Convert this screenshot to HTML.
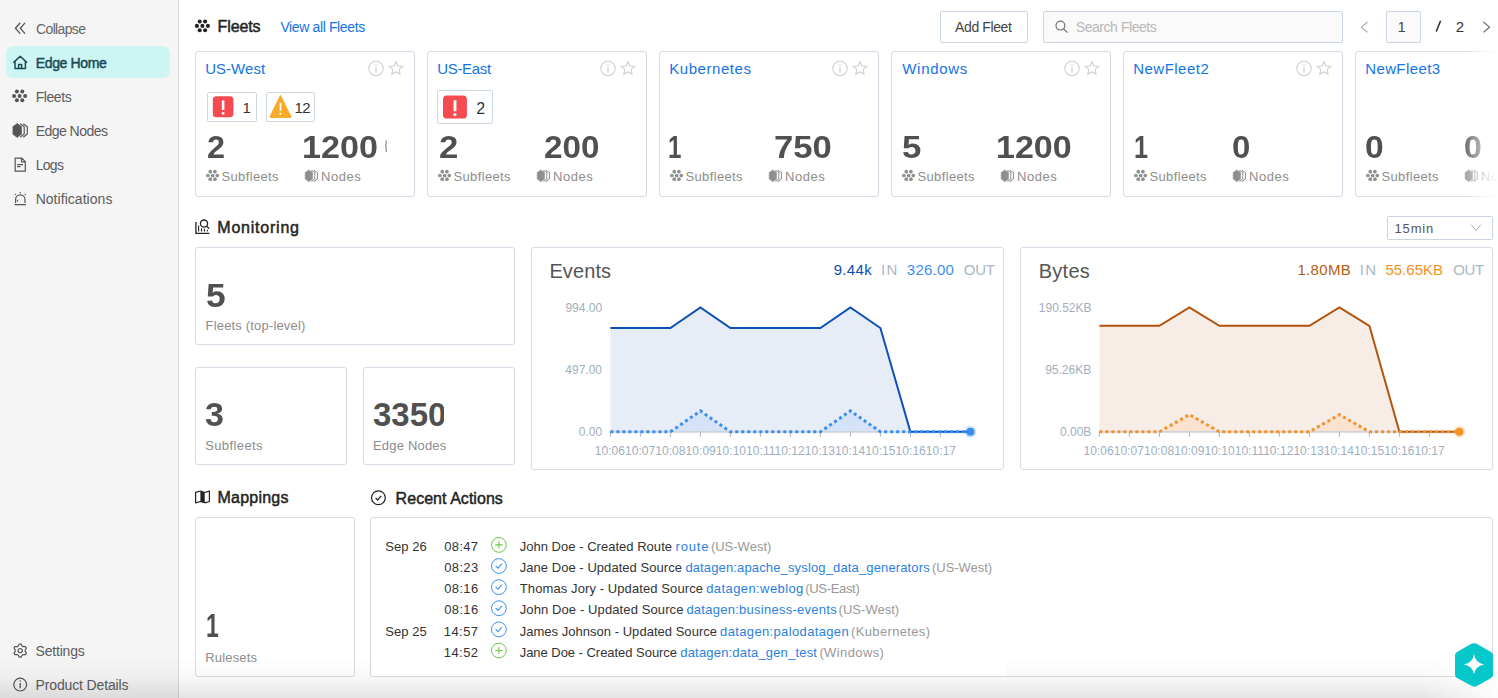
<!DOCTYPE html>
<html><head><meta charset="utf-8"><style>
html,body{margin:0;padding:0}
body{width:1498px;height:698px;overflow:hidden;background:#fff;position:relative;font-family:"Liberation Sans",sans-serif}
.t{position:absolute;white-space:nowrap}
.b{position:absolute;box-sizing:border-box;border:1px solid}
</style></head><body>
<div style="position:absolute;left:0;top:0;width:178px;height:698px;background:#f5f5f5;border-right:1px solid #dcdcdc"></div><div style="position:absolute;left:6px;top:46px;width:164px;height:32px;background:#ccf5f4;border-radius:7px"></div><div class="b" style="left:940px;top:11px;width:88px;height:32px;background:#fff;border-color:#c9d5e0;border-radius:2px;"></div><div class="b" style="left:1043px;top:11px;width:300px;height:32px;background:#fafafa;border-color:#c9d5e0;border-radius:2px;"></div><div class="b" style="left:1386px;top:11px;width:35px;height:32px;background:#fafafa;border-color:#c9d5e0;border-radius:2px;"></div><div class="b" style="left:195px;top:51px;width:220px;height:146px;background:#fff;border-color:#d3dce5;border-radius:3px;"></div><div class="b" style="left:427px;top:51px;width:220px;height:146px;background:#fff;border-color:#d3dce5;border-radius:3px;"></div><div class="b" style="left:659px;top:51px;width:220px;height:146px;background:#fff;border-color:#d3dce5;border-radius:3px;"></div><div class="b" style="left:891px;top:51px;width:220px;height:146px;background:#fff;border-color:#d3dce5;border-radius:3px;"></div><div class="b" style="left:1123px;top:51px;width:220px;height:146px;background:#fff;border-color:#d3dce5;border-radius:3px;"></div><div class="b" style="left:1355px;top:51px;width:220px;height:146px;background:#fff;border-color:#d3dce5;border-radius:3px;"></div><div class="b" style="left:207px;top:92px;width:50px;height:30px;background:#fff;border-color:#ccd7e1;border-radius:2px;"></div><div class="b" style="left:266px;top:92px;width:49px;height:30px;background:#fff;border-color:#ccd7e1;border-radius:2px;"></div><div class="b" style="left:437px;top:90px;width:56px;height:34px;background:#fff;border-color:#ccd7e1;border-radius:2px;"></div><div class="b" style="left:1387px;top:216px;width:106px;height:24px;background:#fff;border-color:#c9d5e0;border-radius:2px;"></div><div class="b" style="left:195px;top:247px;width:320px;height:98px;background:#fff;border-color:#d3dce5;border-radius:3px;"></div><div class="b" style="left:195px;top:367px;width:152px;height:98px;background:#fff;border-color:#d3dce5;border-radius:3px;"></div><div class="b" style="left:363px;top:367px;width:152px;height:98px;background:#fff;border-color:#d3dce5;border-radius:3px;"></div><div class="b" style="left:531px;top:247px;width:473px;height:223px;background:#fff;border-color:#d3dce5;border-radius:3px;"></div><div class="b" style="left:1020px;top:247px;width:473px;height:223px;background:#fff;border-color:#d3dce5;border-radius:3px;"></div><div class="b" style="left:195px;top:517px;width:160px;height:160px;background:#fff;border-color:#d3dce5;border-radius:3px;"></div><div class="b" style="left:370px;top:517px;width:1123px;height:160px;background:#fff;border-color:#d3dce5;border-radius:3px;"></div>
<svg style="position:absolute;left:0;top:0" width="1498" height="698" viewBox="0 0 1498 698"><path d="M20.2 22.8 L15.4 28.3 L20.2 33.6 M25 22.8 L20.3 28.3 L25 33.6" fill="none" stroke="#555" stroke-width="1.3"/><path d="M13.4 62.6 L20.2 56.3 L27 62.6 M15 61.2 V68.4 H25.4 V61.2 M18.6 68.4 V64.4 H21.6 V68.4" fill="none" stroke="#174a54" stroke-width="1.5" stroke-linejoin="round"/><circle cx="16.90" cy="91.50" r="2.0" fill="#555"/><circle cx="22.30" cy="91.50" r="2.0" fill="#555"/><circle cx="14.10" cy="95.90" r="2.0" fill="#555"/><circle cx="19.60" cy="95.90" r="2.0" fill="#555"/><circle cx="25.10" cy="95.90" r="2.0" fill="#555"/><circle cx="16.90" cy="100.20" r="2.0" fill="#555"/><circle cx="22.30" cy="100.20" r="2.0" fill="#555"/><polygon points="17.20,123.60 21.50,126.60 21.50,134.20 17.20,137.40 12.90,134.20 12.90,126.60" fill="#555" stroke="#555" stroke-width="0.6" stroke-linejoin="round"/><polyline points="20.20,123.70 24.20,126.80 24.20,134.00 20.20,137.30" fill="none" stroke="#555" stroke-width="1.20"/><polyline points="23.30,123.70 27.30,126.80 27.30,134.00 23.30,137.30" fill="none" stroke="#555" stroke-width="1.20"/><path d="M15.2 158.2 H21.8 L25.3 161.7 V171.2 H15.2 Z M21.5 158.4 V161.9 H25.1 M17.2 164.6 H23 M17.2 166.7 H20.4" fill="none" stroke="#555" stroke-width="1.2" stroke-linejoin="round"/><path d="M15.6 203 V199.6 A4.7 4.7 0 0 1 25.0 199.6 V203 M14.6 204.7 H26 M20.3 191.9 V193.2 M15.0 194.0 L15.9 194.8 M25.6 194.0 L24.7 194.8 M17.5 201.6 V199.8" fill="none" stroke="#555" stroke-width="1.2"/><polygon points="19.34,644.06 21.06,644.06 22.11,645.98 23.24,646.63 25.44,646.58 26.30,648.07 25.16,649.95 25.16,651.25 26.30,653.13 25.44,654.62 23.24,654.57 22.11,655.22 21.06,657.14 19.34,657.14 18.29,655.22 17.16,654.57 14.96,654.62 14.10,653.13 15.24,651.25 15.24,649.95 14.10,648.07 14.96,646.58 17.16,646.63 18.29,645.98" fill="none" stroke="#555" stroke-width="1.2" stroke-linejoin="round"/><circle cx="20.2" cy="650.6" r="2.1" fill="none" stroke="#555" stroke-width="1.2"/><circle cx="20.2" cy="684.6" r="6.4" fill="none" stroke="#555" stroke-width="1.2"/><path d="M20.2 683 V688.2" stroke="#555" stroke-width="1.3"/><circle cx="20.2" cy="681.1" r="0.75" fill="#555"/><circle cx="199.70" cy="21.50" r="2.05" fill="#222"/><circle cx="205.10" cy="21.50" r="2.05" fill="#222"/><circle cx="196.90" cy="25.90" r="2.05" fill="#222"/><circle cx="202.40" cy="25.90" r="2.05" fill="#222"/><circle cx="207.90" cy="25.90" r="2.05" fill="#222"/><circle cx="199.70" cy="30.20" r="2.05" fill="#222"/><circle cx="205.10" cy="30.20" r="2.05" fill="#222"/><path d="M195.9 222 V233.4 H209.4" fill="none" stroke="#222" stroke-width="1.3"/><path d="M198.6 225.5 V231.6 M201.5 228.3 V231.6 M204.4 228.8 V231.6 M207.3 229.8 V231.6" stroke="#222" stroke-width="1.1"/><circle cx="204" cy="223.6" r="3.6" fill="#fff" stroke="#222" stroke-width="1.3"/><path d="M206.6 226.2 L209.2 228.6" stroke="#222" stroke-width="1.4"/><path d="M195.6 492.3 L200.4 491 L204.7 492.5 L209.4 491.2 V501.5 L204.7 502.8 L200.4 501.5 L195.6 502.8 Z" fill="#fff" stroke="#222" stroke-width="1.2" stroke-linejoin="round"/><path d="M200.4 491 L204.7 492.5 V502.8 L200.4 501.5 Z" fill="#222"/><circle cx="378.4" cy="497.8" r="6.9" fill="none" stroke="#222" stroke-width="1.2"/><path d="M375.6 497.9 L377.6 500 L381.2 495.8" fill="none" stroke="#222" stroke-width="1.2"/><circle cx="1060.4" cy="25.6" r="4.4" fill="none" stroke="#777" stroke-width="1.2"/><path d="M1063.6 28.8 L1067.6 32.6" stroke="#777" stroke-width="1.2"/><path d="M1440.6 20.8 L1436.2 31.6" stroke="#333" stroke-width="1.5"/><path d="M1367.6 22 L1361.4 27.2 L1367.6 32.4" fill="none" stroke="#aaa" stroke-width="1.1"/><path d="M1483.4 22 L1489.6 27.2 L1483.4 32.4" fill="none" stroke="#666" stroke-width="1.1"/><path d="M1471.2 224.6 L1476 230.6 L1480.8 224.6" fill="none" stroke="#aaa" stroke-width="1"/><circle cx="376" cy="68.4" r="7.2" fill="none" stroke="#cfcfcf" stroke-width="1.1"/><path d="M376 67.3 V72.4" stroke="#cfcfcf" stroke-width="1.3"/><circle cx="376" cy="65.1" r="0.8" fill="#cfcfcf"/><polygon points="395.90,61.40 397.78,66.01 402.75,66.38 398.94,69.59 400.13,74.42 395.90,71.80 391.67,74.42 392.86,69.59 389.05,66.38 394.02,66.01" fill="none" stroke="#cfcfcf" stroke-width="1.1" stroke-linejoin="round"/><circle cx="608" cy="68.4" r="7.2" fill="none" stroke="#cfcfcf" stroke-width="1.1"/><path d="M608 67.3 V72.4" stroke="#cfcfcf" stroke-width="1.3"/><circle cx="608" cy="65.1" r="0.8" fill="#cfcfcf"/><polygon points="627.90,61.40 629.78,66.01 634.75,66.38 630.94,69.59 632.13,74.42 627.90,71.80 623.67,74.42 624.86,69.59 621.05,66.38 626.02,66.01" fill="none" stroke="#cfcfcf" stroke-width="1.1" stroke-linejoin="round"/><circle cx="840" cy="68.4" r="7.2" fill="none" stroke="#cfcfcf" stroke-width="1.1"/><path d="M840 67.3 V72.4" stroke="#cfcfcf" stroke-width="1.3"/><circle cx="840" cy="65.1" r="0.8" fill="#cfcfcf"/><polygon points="859.90,61.40 861.78,66.01 866.75,66.38 862.94,69.59 864.13,74.42 859.90,71.80 855.67,74.42 856.86,69.59 853.05,66.38 858.02,66.01" fill="none" stroke="#cfcfcf" stroke-width="1.1" stroke-linejoin="round"/><circle cx="1072" cy="68.4" r="7.2" fill="none" stroke="#cfcfcf" stroke-width="1.1"/><path d="M1072 67.3 V72.4" stroke="#cfcfcf" stroke-width="1.3"/><circle cx="1072" cy="65.1" r="0.8" fill="#cfcfcf"/><polygon points="1091.90,61.40 1093.78,66.01 1098.75,66.38 1094.94,69.59 1096.13,74.42 1091.90,71.80 1087.67,74.42 1088.86,69.59 1085.05,66.38 1090.02,66.01" fill="none" stroke="#cfcfcf" stroke-width="1.1" stroke-linejoin="round"/><circle cx="1304" cy="68.4" r="7.2" fill="none" stroke="#cfcfcf" stroke-width="1.1"/><path d="M1304 67.3 V72.4" stroke="#cfcfcf" stroke-width="1.3"/><circle cx="1304" cy="65.1" r="0.8" fill="#cfcfcf"/><polygon points="1323.90,61.40 1325.78,66.01 1330.75,66.38 1326.94,69.59 1328.13,74.42 1323.90,71.80 1319.67,74.42 1320.86,69.59 1317.05,66.38 1322.02,66.01" fill="none" stroke="#cfcfcf" stroke-width="1.1" stroke-linejoin="round"/><circle cx="210.28" cy="171.72" r="1.85" fill="#8f8f8f"/><circle cx="214.92" cy="171.72" r="1.85" fill="#8f8f8f"/><circle cx="207.87" cy="175.50" r="1.85" fill="#8f8f8f"/><circle cx="212.60" cy="175.50" r="1.85" fill="#8f8f8f"/><circle cx="217.33" cy="175.50" r="1.85" fill="#8f8f8f"/><circle cx="210.28" cy="179.20" r="1.85" fill="#8f8f8f"/><circle cx="214.92" cy="179.20" r="1.85" fill="#8f8f8f"/><polygon points="308.85,169.97 312.51,172.52 312.51,178.98 308.85,181.70 305.20,178.98 305.20,172.52" fill="#8f8f8f" stroke="#8f8f8f" stroke-width="0.6" stroke-linejoin="round"/><polyline points="311.40,170.06 314.81,172.69 314.81,178.81 311.40,181.62" fill="none" stroke="#8f8f8f" stroke-width="1.02"/><polyline points="314.04,170.06 317.44,172.69 317.44,178.81 314.04,181.62" fill="none" stroke="#8f8f8f" stroke-width="1.02"/><circle cx="442.28" cy="171.72" r="1.85" fill="#8f8f8f"/><circle cx="446.92" cy="171.72" r="1.85" fill="#8f8f8f"/><circle cx="439.87" cy="175.50" r="1.85" fill="#8f8f8f"/><circle cx="444.60" cy="175.50" r="1.85" fill="#8f8f8f"/><circle cx="449.33" cy="175.50" r="1.85" fill="#8f8f8f"/><circle cx="442.28" cy="179.20" r="1.85" fill="#8f8f8f"/><circle cx="446.92" cy="179.20" r="1.85" fill="#8f8f8f"/><polygon points="540.86,169.97 544.51,172.52 544.51,178.98 540.86,181.70 537.20,178.98 537.20,172.52" fill="#8f8f8f" stroke="#8f8f8f" stroke-width="0.6" stroke-linejoin="round"/><polyline points="543.41,170.06 546.81,172.69 546.81,178.81 543.41,181.62" fill="none" stroke="#8f8f8f" stroke-width="1.02"/><polyline points="546.04,170.06 549.44,172.69 549.44,178.81 546.04,181.62" fill="none" stroke="#8f8f8f" stroke-width="1.02"/><circle cx="674.28" cy="171.72" r="1.85" fill="#8f8f8f"/><circle cx="678.92" cy="171.72" r="1.85" fill="#8f8f8f"/><circle cx="671.87" cy="175.50" r="1.85" fill="#8f8f8f"/><circle cx="676.60" cy="175.50" r="1.85" fill="#8f8f8f"/><circle cx="681.33" cy="175.50" r="1.85" fill="#8f8f8f"/><circle cx="674.28" cy="179.20" r="1.85" fill="#8f8f8f"/><circle cx="678.92" cy="179.20" r="1.85" fill="#8f8f8f"/><polygon points="772.86,169.97 776.51,172.52 776.51,178.98 772.86,181.70 769.20,178.98 769.20,172.52" fill="#8f8f8f" stroke="#8f8f8f" stroke-width="0.6" stroke-linejoin="round"/><polyline points="775.41,170.06 778.81,172.69 778.81,178.81 775.41,181.62" fill="none" stroke="#8f8f8f" stroke-width="1.02"/><polyline points="778.04,170.06 781.44,172.69 781.44,178.81 778.04,181.62" fill="none" stroke="#8f8f8f" stroke-width="1.02"/><circle cx="906.28" cy="171.72" r="1.85" fill="#8f8f8f"/><circle cx="910.92" cy="171.72" r="1.85" fill="#8f8f8f"/><circle cx="903.87" cy="175.50" r="1.85" fill="#8f8f8f"/><circle cx="908.60" cy="175.50" r="1.85" fill="#8f8f8f"/><circle cx="913.33" cy="175.50" r="1.85" fill="#8f8f8f"/><circle cx="906.28" cy="179.20" r="1.85" fill="#8f8f8f"/><circle cx="910.92" cy="179.20" r="1.85" fill="#8f8f8f"/><polygon points="1004.86,169.97 1008.51,172.52 1008.51,178.98 1004.86,181.70 1001.20,178.98 1001.20,172.52" fill="#8f8f8f" stroke="#8f8f8f" stroke-width="0.6" stroke-linejoin="round"/><polyline points="1007.41,170.06 1010.81,172.69 1010.81,178.81 1007.41,181.62" fill="none" stroke="#8f8f8f" stroke-width="1.02"/><polyline points="1010.04,170.06 1013.44,172.69 1013.44,178.81 1010.04,181.62" fill="none" stroke="#8f8f8f" stroke-width="1.02"/><circle cx="1138.28" cy="171.72" r="1.85" fill="#8f8f8f"/><circle cx="1142.92" cy="171.72" r="1.85" fill="#8f8f8f"/><circle cx="1135.87" cy="175.50" r="1.85" fill="#8f8f8f"/><circle cx="1140.60" cy="175.50" r="1.85" fill="#8f8f8f"/><circle cx="1145.33" cy="175.50" r="1.85" fill="#8f8f8f"/><circle cx="1138.28" cy="179.20" r="1.85" fill="#8f8f8f"/><circle cx="1142.92" cy="179.20" r="1.85" fill="#8f8f8f"/><polygon points="1236.86,169.97 1240.51,172.52 1240.51,178.98 1236.86,181.70 1233.20,178.98 1233.20,172.52" fill="#8f8f8f" stroke="#8f8f8f" stroke-width="0.6" stroke-linejoin="round"/><polyline points="1239.40,170.06 1242.81,172.69 1242.81,178.81 1239.40,181.62" fill="none" stroke="#8f8f8f" stroke-width="1.02"/><polyline points="1242.04,170.06 1245.44,172.69 1245.44,178.81 1242.04,181.62" fill="none" stroke="#8f8f8f" stroke-width="1.02"/><circle cx="1370.28" cy="171.72" r="1.85" fill="#8f8f8f"/><circle cx="1374.92" cy="171.72" r="1.85" fill="#8f8f8f"/><circle cx="1367.87" cy="175.50" r="1.85" fill="#8f8f8f"/><circle cx="1372.60" cy="175.50" r="1.85" fill="#8f8f8f"/><circle cx="1377.33" cy="175.50" r="1.85" fill="#8f8f8f"/><circle cx="1370.28" cy="179.20" r="1.85" fill="#8f8f8f"/><circle cx="1374.92" cy="179.20" r="1.85" fill="#8f8f8f"/><polygon points="1468.86,169.97 1472.51,172.52 1472.51,178.98 1468.86,181.70 1465.20,178.98 1465.20,172.52" fill="#8f8f8f" stroke="#8f8f8f" stroke-width="0.6" stroke-linejoin="round"/><polyline points="1471.40,170.06 1474.81,172.69 1474.81,178.81 1471.40,181.62" fill="none" stroke="#8f8f8f" stroke-width="1.02"/><polyline points="1474.04,170.06 1477.44,172.69 1477.44,178.81 1474.04,181.62" fill="none" stroke="#8f8f8f" stroke-width="1.02"/><path d="M212.8 99.8 Q212.8 96.3 216.3 96.3 H230 Q233.4 96.3 233.4 99.8 V113.7 Q233.4 117.2 230 117.2 H216.3 Q212.8 117.2 212.8 113.7 Z" fill="#f44a50"/><path d="M223.1 100.4 V110" stroke="#fff" stroke-width="2.6"/><circle cx="223.1" cy="113.3" r="1.4" fill="#fff"/><path d="M280.4 95.4 L291 116.8 Q291.3 117.4 290.4 117.4 H270.6 Q269.7 117.4 270 116.8 Z" fill="#f9aa25" stroke="#f9aa25" stroke-width="1" stroke-linejoin="round"/><path d="M280.5 102.8 V110.8" stroke="#fff" stroke-width="1.8"/><circle cx="280.5" cy="113.8" r="1.1" fill="#fff"/><path d="M443 99.3 Q443 95.4 446.9 95.4 H463 Q466.9 95.4 466.9 99.3 V114.7 Q466.9 118.6 463 118.6 H446.9 Q443 118.6 443 114.7 Z" fill="#f44a50"/><path d="M455 100.2 V111.2" stroke="#fff" stroke-width="2.9"/><circle cx="455" cy="114.6" r="1.55" fill="#fff"/><path d="M386.4 140.5 Q385.2 146 386.4 152" fill="none" stroke="#9a9a9a" stroke-width="1.4"/><polygon points="610.4,431.8 610.4,328.0 640.4,328.0 670.4,328.0 700.4,307.4 730.4,328.0 760.4,328.0 790.4,328.0 820.4,328.0 850.4,307.4 880.4,328.0 910.4,431.8 940.4,431.8 970.4,431.8 970.4,431.8" fill="#e6edf7"/><polygon points="610.4,431.8 610.4,431.8 640.4,431.8 670.4,431.8 700.4,410.9 730.4,431.8 760.4,431.8 790.4,431.8 820.4,431.8 850.4,410.9 880.4,431.8 910.4,431.8 940.4,431.8 970.4,431.8 970.4,431.8" fill="#d4e3f8"/><line x1="609.9" y1="431.8" x2="970.4" y2="431.8" stroke="#cdd4db" stroke-width="1.8"/><line x1="610.4" y1="431.8" x2="610.4" y2="436.8" stroke="#a9b5c1" stroke-width="1"/><line x1="640.4" y1="431.8" x2="640.4" y2="436.8" stroke="#a9b5c1" stroke-width="1"/><line x1="670.4" y1="431.8" x2="670.4" y2="436.8" stroke="#a9b5c1" stroke-width="1"/><line x1="700.4" y1="431.8" x2="700.4" y2="436.8" stroke="#a9b5c1" stroke-width="1"/><line x1="730.4" y1="431.8" x2="730.4" y2="436.8" stroke="#a9b5c1" stroke-width="1"/><line x1="760.4" y1="431.8" x2="760.4" y2="436.8" stroke="#a9b5c1" stroke-width="1"/><line x1="790.4" y1="431.8" x2="790.4" y2="436.8" stroke="#a9b5c1" stroke-width="1"/><line x1="820.4" y1="431.8" x2="820.4" y2="436.8" stroke="#a9b5c1" stroke-width="1"/><line x1="850.4" y1="431.8" x2="850.4" y2="436.8" stroke="#a9b5c1" stroke-width="1"/><line x1="880.4" y1="431.8" x2="880.4" y2="436.8" stroke="#a9b5c1" stroke-width="1"/><line x1="910.4" y1="431.8" x2="910.4" y2="436.8" stroke="#a9b5c1" stroke-width="1"/><line x1="940.4" y1="431.8" x2="940.4" y2="436.8" stroke="#a9b5c1" stroke-width="1"/><polyline points="610.4,328.0 640.4,328.0 670.4,328.0 700.4,307.4 730.4,328.0 760.4,328.0 790.4,328.0 820.4,328.0 850.4,307.4 880.4,328.0 910.4,431.8 940.4,431.8 970.4,431.8" fill="none" stroke="#0b50b3" stroke-width="2" stroke-linejoin="miter"/><polyline points="610.4,431.8 640.4,431.8 670.4,431.8 700.4,410.9 730.4,431.8 760.4,431.8 790.4,431.8 820.4,431.8 850.4,410.9 880.4,431.8 910.4,431.8 940.4,431.8 970.4,431.8" fill="none" stroke="#3a8ef0" stroke-width="3" stroke-dasharray="3 3"/><circle cx="970.4" cy="431.8" r="6" fill="rgba(58,142,240,0.25)"/><circle cx="970.4" cy="431.8" r="4" fill="#3a8ef0"/><polygon points="1099.4,431.8 1099.4,325.8 1129.4,325.8 1159.4,325.8 1189.4,307.5 1219.4,325.8 1249.4,325.8 1279.4,325.8 1309.4,325.8 1339.4,307.5 1369.4,325.8 1399.4,431.8 1429.4,431.8 1459.4,431.8 1459.4,431.8" fill="#f8ece6"/><polygon points="1099.4,431.8 1099.4,431.8 1129.4,431.8 1159.4,431.8 1189.4,414.6 1219.4,431.8 1249.4,431.8 1279.4,431.8 1309.4,431.8 1339.4,414.6 1369.4,431.8 1399.4,431.8 1429.4,431.8 1459.4,431.8 1459.4,431.8" fill="#fbe2cf"/><line x1="1098.9" y1="431.8" x2="1459.4" y2="431.8" stroke="#cdd4db" stroke-width="1.8"/><line x1="1099.4" y1="431.8" x2="1099.4" y2="436.8" stroke="#a9b5c1" stroke-width="1"/><line x1="1129.4" y1="431.8" x2="1129.4" y2="436.8" stroke="#a9b5c1" stroke-width="1"/><line x1="1159.4" y1="431.8" x2="1159.4" y2="436.8" stroke="#a9b5c1" stroke-width="1"/><line x1="1189.4" y1="431.8" x2="1189.4" y2="436.8" stroke="#a9b5c1" stroke-width="1"/><line x1="1219.4" y1="431.8" x2="1219.4" y2="436.8" stroke="#a9b5c1" stroke-width="1"/><line x1="1249.4" y1="431.8" x2="1249.4" y2="436.8" stroke="#a9b5c1" stroke-width="1"/><line x1="1279.4" y1="431.8" x2="1279.4" y2="436.8" stroke="#a9b5c1" stroke-width="1"/><line x1="1309.4" y1="431.8" x2="1309.4" y2="436.8" stroke="#a9b5c1" stroke-width="1"/><line x1="1339.4" y1="431.8" x2="1339.4" y2="436.8" stroke="#a9b5c1" stroke-width="1"/><line x1="1369.4" y1="431.8" x2="1369.4" y2="436.8" stroke="#a9b5c1" stroke-width="1"/><line x1="1399.4" y1="431.8" x2="1399.4" y2="436.8" stroke="#a9b5c1" stroke-width="1"/><line x1="1429.4" y1="431.8" x2="1429.4" y2="436.8" stroke="#a9b5c1" stroke-width="1"/><polyline points="1099.4,325.8 1129.4,325.8 1159.4,325.8 1189.4,307.5 1219.4,325.8 1249.4,325.8 1279.4,325.8 1309.4,325.8 1339.4,307.5 1369.4,325.8 1399.4,431.8 1429.4,431.8 1459.4,431.8" fill="none" stroke="#b3520b" stroke-width="2" stroke-linejoin="miter"/><polyline points="1099.4,431.8 1129.4,431.8 1159.4,431.8 1189.4,414.6 1219.4,431.8 1249.4,431.8 1279.4,431.8 1309.4,431.8 1339.4,414.6 1369.4,431.8 1399.4,431.8 1429.4,431.8 1459.4,431.8" fill="none" stroke="#f3922a" stroke-width="3" stroke-dasharray="3 3"/><circle cx="1459.4" cy="431.8" r="6" fill="rgba(243,146,42,0.25)"/><circle cx="1459.4" cy="431.8" r="4" fill="#f3922a"/><circle cx="498.9" cy="544.9" r="7.4" fill="none" stroke="#68c944" stroke-width="1.0"/><path d="M498.9 541.3 V548.5 M495.3 544.9 H502.5" stroke="#68c944" stroke-width="1.1"/><circle cx="498.9" cy="566.0" r="7.4" fill="none" stroke="#3b93f5" stroke-width="1.0"/><path d="M495.6 565.8 L498 568.2 L501.9 563.6" fill="none" stroke="#3b93f5" stroke-width="1.1"/><circle cx="498.9" cy="587.1" r="7.4" fill="none" stroke="#3b93f5" stroke-width="1.0"/><path d="M495.6 586.9 L498 589.3 L501.9 584.7" fill="none" stroke="#3b93f5" stroke-width="1.1"/><circle cx="498.9" cy="608.2" r="7.4" fill="none" stroke="#3b93f5" stroke-width="1.0"/><path d="M495.6 608.0 L498 610.4 L501.9 605.8" fill="none" stroke="#3b93f5" stroke-width="1.1"/><circle cx="498.9" cy="629.4" r="7.4" fill="none" stroke="#3b93f5" stroke-width="1.0"/><path d="M495.6 629.2 L498 631.6 L501.9 627.0" fill="none" stroke="#3b93f5" stroke-width="1.1"/><circle cx="498.9" cy="650.5" r="7.4" fill="none" stroke="#68c944" stroke-width="1.0"/><path d="M498.9 646.9 V654.1 M495.3 650.5 H502.5" stroke="#68c944" stroke-width="1.1"/></svg>
<div class="t" style="left:36.05px;top:22px;font-size:14px;line-height:14px;color:#666;letter-spacing:-0.645px;">Collapse</div><div class="t" style="left:35.77px;top:56px;font-size:14px;line-height:14px;color:#174a54;-webkit-text-stroke:0.45px #174a54;letter-spacing:-0.372px;">Edge Home</div><div class="t" style="left:35.65px;top:90px;font-size:14px;line-height:14px;color:#5c5c5c;letter-spacing:-0.417px;">Fleets</div><div class="t" style="left:35.65px;top:124px;font-size:14px;line-height:14px;color:#5c5c5c;letter-spacing:-0.521px;">Edge Nodes</div><div class="t" style="left:35.65px;top:158px;font-size:14px;line-height:14px;color:#5c5c5c;letter-spacing:-0.698px;">Logs</div><div class="t" style="left:35.65px;top:192px;font-size:14px;line-height:14px;color:#5c5c5c;letter-spacing:0.042px;">Notifications</div><div class="t" style="left:35.56px;top:644px;font-size:14px;line-height:14px;color:#5c5c5c;letter-spacing:-0.202px;">Settings</div><div class="t" style="left:35.55px;top:678px;font-size:14px;line-height:14px;color:#5c5c5c;letter-spacing:-0.142px;">Product Details</div><div class="t" style="left:217.51px;top:19px;font-size:16px;line-height:16px;color:#222;-webkit-text-stroke:0.45px #222;letter-spacing:-0.097px;">Fleets</div><div class="t" style="left:217.31px;top:220px;font-size:16px;line-height:16px;color:#222;-webkit-text-stroke:0.45px #222;letter-spacing:0.774px;">Monitoring</div><div class="t" style="left:217.51px;top:490px;font-size:16px;line-height:16px;color:#222;-webkit-text-stroke:0.45px #222;letter-spacing:0.231px;">Mappings</div><div class="t" style="left:395.61px;top:491px;font-size:16px;line-height:16px;color:#222;-webkit-text-stroke:0.45px #222;letter-spacing:0.039px;">Recent Actions</div><div class="t" style="left:280.38px;top:20px;font-size:14px;line-height:14px;color:#1473e6;letter-spacing:-0.372px;">View all Fleets</div><div class="t" style="left:955.08px;top:20px;font-size:14px;line-height:14px;color:#444;letter-spacing:-0.391px;">Add Fleet</div><div class="t" style="left:1075.76px;top:20px;font-size:14px;line-height:14px;color:#b8b8b8;letter-spacing:-0.442px;">Search Fleets</div><div class="t" style="left:1397.82px;top:20px;font-size:14px;line-height:14px;color:#444;">1</div><div class="t" style="left:1455.75px;top:19px;font-size:15px;line-height:15px;color:#333;">2</div><div class="t" style="left:205.25px;top:61px;font-size:15px;line-height:15px;color:#1473e6;letter-spacing:0.014px;">US-West</div><div class="t" style="left:207.47px;top:131px;font-size:32px;line-height:32px;color:#505050;font-weight:700;transform:scaleX(1.0132);transform-origin:0 0;">2</div><div class="t" style="left:301.61px;top:131px;font-size:32px;line-height:32px;color:#505050;font-weight:700;transform:scaleX(1.0669);transform-origin:0 0;">1200</div><div class="t" style="left:221.53px;top:170px;font-size:13px;line-height:13px;color:#8c8c8c;letter-spacing:0.354px;">Subfleets</div><div class="t" style="left:321.02px;top:170px;font-size:13px;line-height:13px;color:#8c8c8c;letter-spacing:0.560px;">Nodes</div><div class="t" style="left:437.25px;top:61px;font-size:15px;line-height:15px;color:#1473e6;letter-spacing:-0.336px;">US-East</div><div class="t" style="left:438.69px;top:131px;font-size:32px;line-height:32px;color:#505050;font-weight:700;transform:scaleX(1.0847);transform-origin:0 0;">2</div><div class="t" style="left:544.24px;top:131px;font-size:32px;line-height:32px;color:#505050;font-weight:700;transform:scaleX(1.0395);transform-origin:0 0;">200</div><div class="t" style="left:453.53px;top:170px;font-size:13px;line-height:13px;color:#8c8c8c;letter-spacing:0.354px;">Subfleets</div><div class="t" style="left:553.02px;top:170px;font-size:13px;line-height:13px;color:#8c8c8c;letter-spacing:0.560px;">Nodes</div><div class="t" style="left:669.20px;top:61px;font-size:15px;line-height:15px;color:#1473e6;letter-spacing:0.567px;">Kubernetes</div><div class="t" style="left:667.98px;top:131px;font-size:32px;line-height:32px;color:#505050;font-weight:700;transform:scaleX(0.7532);transform-origin:0 0;">1</div><div class="t" style="left:773.97px;top:131px;font-size:32px;line-height:32px;color:#505050;font-weight:700;transform:scaleX(1.0833);transform-origin:0 0;">750</div><div class="t" style="left:685.53px;top:170px;font-size:13px;line-height:13px;color:#8c8c8c;letter-spacing:0.354px;">Subfleets</div><div class="t" style="left:785.02px;top:170px;font-size:13px;line-height:13px;color:#8c8c8c;letter-spacing:0.560px;">Nodes</div><div class="t" style="left:902.21px;top:61px;font-size:15px;line-height:15px;color:#1473e6;letter-spacing:0.716px;">Windows</div><div class="t" style="left:902.22px;top:131px;font-size:32px;line-height:32px;color:#505050;font-weight:700;transform:scaleX(1.0902);transform-origin:0 0;">5</div><div class="t" style="left:995.52px;top:131px;font-size:32px;line-height:32px;color:#505050;font-weight:700;transform:scaleX(1.0640);transform-origin:0 0;">1200</div><div class="t" style="left:917.53px;top:170px;font-size:13px;line-height:13px;color:#8c8c8c;letter-spacing:0.354px;">Subfleets</div><div class="t" style="left:1017.02px;top:170px;font-size:13px;line-height:13px;color:#8c8c8c;letter-spacing:0.560px;">Nodes</div><div class="t" style="left:1133.20px;top:61px;font-size:15px;line-height:15px;color:#1473e6;letter-spacing:0.482px;">NewFleet2</div><div class="t" style="left:1134.01px;top:131px;font-size:32px;line-height:32px;color:#505050;font-weight:700;transform:scaleX(0.7871);transform-origin:0 0;">1</div><div class="t" style="left:1232.13px;top:131px;font-size:32px;line-height:32px;color:#505050;font-weight:700;transform:scaleX(1.0324);transform-origin:0 0;">0</div><div class="t" style="left:1149.53px;top:170px;font-size:13px;line-height:13px;color:#8c8c8c;letter-spacing:0.354px;">Subfleets</div><div class="t" style="left:1249.02px;top:170px;font-size:13px;line-height:13px;color:#8c8c8c;letter-spacing:0.560px;">Nodes</div><div class="t" style="left:1365.20px;top:61px;font-size:15px;line-height:15px;color:#1473e6;letter-spacing:0.393px;">NewFleet3</div><div class="t" style="left:1365.01px;top:131px;font-size:32px;line-height:32px;color:#505050;font-weight:700;transform:scaleX(1.0521);transform-origin:0 0;">0</div><div class="t" style="left:1464.37px;top:131px;font-size:32px;line-height:32px;color:#505050;font-weight:700;transform:scaleX(1.0061);transform-origin:0 0;">0</div><div class="t" style="left:1381.53px;top:170px;font-size:13px;line-height:13px;color:#8c8c8c;letter-spacing:0.354px;">Subfleets</div><div class="t" style="left:1481.02px;top:170px;font-size:13px;line-height:13px;color:#8c8c8c;letter-spacing:0.560px;">Nodes</div><div class="t" style="left:242.48px;top:100px;font-size:15px;line-height:15px;color:#333;">1</div><div class="t" style="left:294.58px;top:100px;font-size:15px;line-height:15px;color:#333;letter-spacing:-0.620px;">12</div><div class="t" style="left:476.35px;top:101px;font-size:16px;line-height:16px;color:#333;">2</div><div class="t" style="left:206.20px;top:279px;font-size:33px;line-height:33px;color:#505050;font-weight:700;transform:scaleX(1.0699);transform-origin:0 0;">5</div><div class="t" style="left:205.62px;top:319px;font-size:13px;line-height:13px;color:#8c8c8c;letter-spacing:0.169px;">Fleets (top-level)</div><div class="t" style="left:205.12px;top:398px;font-size:33px;line-height:33px;color:#505050;font-weight:700;transform:scaleX(1.0304);transform-origin:0 0;">3</div><div class="t" style="left:205.13px;top:439px;font-size:13px;line-height:13px;color:#8c8c8c;letter-spacing:0.404px;">Subfleets</div><div class="t" style="left:372.95px;top:398px;font-size:33px;line-height:33px;color:#505050;font-weight:700;width:71.5px;overflow:hidden;">3350</div><div class="t" style="left:372.92px;top:439px;font-size:13px;line-height:13px;color:#8c8c8c;letter-spacing:0.205px;">Edge Nodes</div><div class="t" style="left:206.28px;top:609px;font-size:33px;line-height:33px;color:#505050;font-weight:700;transform:scaleX(0.6980);transform-origin:0 0;">1</div><div class="t" style="left:205.32px;top:651px;font-size:13px;line-height:13px;color:#8c8c8c;letter-spacing:0.163px;">Rulesets</div><div class="t" style="left:1394.48px;top:222px;font-size:13px;line-height:13px;color:#555;letter-spacing:0.860px;">15min</div><div class="t" style="left:549.44px;top:261px;font-size:20px;line-height:20px;color:#555;letter-spacing:0.096px;">Events</div><div class="t" style="left:833.65px;top:262px;font-size:15px;line-height:15px;color:#0b4fb0;letter-spacing:0.342px;">9.44k</div><div class="t" style="left:881.06px;top:262px;font-size:15px;line-height:15px;color:#a9b7c5;letter-spacing:1.380px;">IN</div><div class="t" style="left:906.86px;top:262px;font-size:15px;line-height:15px;color:#3b8ff0;letter-spacing:0.242px;">326.00</div><div class="t" style="left:963.87px;top:262px;font-size:15px;line-height:15px;color:#a9b7c5;letter-spacing:-0.339px;">OUT</div><div class="t" style="left:1038.64px;top:261px;font-size:20px;line-height:20px;color:#555;letter-spacing:0.306px;">Bytes</div><div class="t" style="left:1297.38px;top:262px;font-size:15px;line-height:15px;color:#b85c12;letter-spacing:0.328px;">1.80MB</div><div class="t" style="left:1359.76px;top:262px;font-size:15px;line-height:15px;color:#a9b7c5;letter-spacing:1.280px;">IN</div><div class="t" style="left:1385.39px;top:262px;font-size:15px;line-height:15px;color:#f5901e;letter-spacing:0.032px;">55.65KB</div><div class="t" style="left:1453.27px;top:262px;font-size:15px;line-height:15px;color:#a9b7c5;letter-spacing:-0.439px;">OUT</div><div class="t" style="left:594.81px;top:445px;font-size:12px;line-height:12px;color:#9eafc0;letter-spacing:0.045px;">10:0610:0710:0810:0910:1010:1110:1210:1310:1410:1510:1610:17</div><div class="t" style="left:1083.41px;top:445px;font-size:12px;line-height:12px;color:#9eafc0;letter-spacing:0.045px;">10:0610:0710:0810:0910:1010:1110:1210:1310:1410:1510:1610:17</div><div class="t" style="left:385.33px;top:540px;font-size:13px;line-height:13px;color:#333;letter-spacing:0.047px;">Sep 26</div><div class="t" style="left:385.33px;top:625px;font-size:13px;line-height:13px;color:#333;letter-spacing:0.042px;">Sep 25</div><div class="t" style="left:444.32px;top:540px;font-size:13px;line-height:13px;color:#333;letter-spacing:0.310px;">08:47</div><div class="t" style="left:444.32px;top:561px;font-size:13px;line-height:13px;color:#333;letter-spacing:0.319px;">08:23</div><div class="t" style="left:444.32px;top:582px;font-size:13px;line-height:13px;color:#333;letter-spacing:0.324px;">08:16</div><div class="t" style="left:444.32px;top:603px;font-size:13px;line-height:13px;color:#333;letter-spacing:0.324px;">08:16</div><div class="t" style="left:443.78px;top:625px;font-size:13px;line-height:13px;color:#333;letter-spacing:0.445px;">14:57</div><div class="t" style="left:443.78px;top:646px;font-size:13px;line-height:13px;color:#333;letter-spacing:0.445px;">14:52</div><div class="t" style="left:519.70px;top:540px;font-size:13px;line-height:13px;color:#333;letter-spacing:0.024px;">John Doe - Created Route</div><div class="t" style="left:675.48px;top:540px;font-size:13px;line-height:13px;color:#2a7fe0;letter-spacing:0.841px;">route</div><div class="t" style="left:710.91px;top:540px;font-size:13px;line-height:13px;color:#999;">(US-West)</div><div class="t" style="left:519.70px;top:561px;font-size:13px;line-height:13px;color:#333;letter-spacing:0.046px;">Jane Doe - Updated Source</div><div class="t" style="left:685.39px;top:561px;font-size:13px;line-height:13px;color:#2a7fe0;letter-spacing:0.141px;">datagen:apache_syslog_data_generators</div><div class="t" style="left:932.01px;top:561px;font-size:13px;line-height:13px;color:#999;letter-spacing:-0.043px;">(US-West)</div><div class="t" style="left:519.84px;top:582px;font-size:13px;line-height:13px;color:#333;letter-spacing:0.093px;">Thomas Jory - Updated Source</div><div class="t" style="left:706.19px;top:582px;font-size:13px;line-height:13px;color:#2a7fe0;letter-spacing:0.412px;">datagen:weblog</div><div class="t" style="left:805.21px;top:582px;font-size:13px;line-height:13px;color:#999;letter-spacing:-0.318px;">(US-East)</div><div class="t" style="left:519.70px;top:603px;font-size:13px;line-height:13px;color:#333;letter-spacing:0.109px;">John Doe - Updated Source</div><div class="t" style="left:686.39px;top:603px;font-size:13px;line-height:13px;color:#2a7fe0;letter-spacing:0.262px;">datagen:business-events</div><div class="t" style="left:838.61px;top:603px;font-size:13px;line-height:13px;color:#999;letter-spacing:0.020px;">(US-West)</div><div class="t" style="left:519.70px;top:625px;font-size:13px;line-height:13px;color:#333;letter-spacing:0.026px;">James Johnson - Updated Source</div><div class="t" style="left:720.09px;top:625px;font-size:13px;line-height:13px;color:#2a7fe0;letter-spacing:0.357px;">datagen:palodatagen</div><div class="t" style="left:851.11px;top:625px;font-size:13px;line-height:13px;color:#999;letter-spacing:0.342px;">(Kubernetes)</div><div class="t" style="left:519.70px;top:646px;font-size:13px;line-height:13px;color:#333;letter-spacing:-0.037px;">Jane Doe - Created Source</div><div class="t" style="left:680.29px;top:646px;font-size:13px;line-height:13px;color:#2a7fe0;letter-spacing:0.183px;">datagen:data_gen_test</div><div class="t" style="left:819.41px;top:646px;font-size:13px;line-height:13px;color:#999;letter-spacing:0.382px;">(Windows)</div><div class="t" style="left:565.41px;top:302px;font-size:12px;line-height:12px;color:#9eafc0;">994.00</div><div class="t" style="left:565.31px;top:364px;font-size:12px;line-height:12px;color:#9eafc0;">497.00</div><div class="t" style="left:578.82px;top:426px;font-size:12px;line-height:12px;color:#9eafc0;">0.00</div><div class="t" style="left:1038.80px;top:302px;font-size:12px;line-height:12px;color:#9eafc0;">190.52KB</div><div class="t" style="left:1045.19px;top:364px;font-size:12px;line-height:12px;color:#9eafc0;">95.26KB</div><div class="t" style="left:1059.98px;top:426px;font-size:12px;line-height:12px;color:#9eafc0;">0.00B</div>
<div style="position:absolute;left:1458px;top:45px;width:40px;height:160px;background:linear-gradient(to right,rgba(255,255,255,0),rgba(255,255,255,1))"></div><div style="position:absolute;left:0px;top:657px;width:371px;height:41px;background:linear-gradient(to bottom,rgba(0,0,0,0) 0px,rgba(0,0,0,0.022) 19px,rgba(0,0,0,0.1) 41px);-webkit-mask-image:linear-gradient(to right,#000 1420px,rgba(0,0,0,0.1) 1498px);"></div><div style="position:absolute;left:371px;top:676px;width:635px;height:22px;background:linear-gradient(to bottom,rgba(0,0,0,0) -19px,rgba(0,0,0,0.022) 0px,rgba(0,0,0,0.1) 22px);-webkit-mask-image:linear-gradient(to right,#000 1049px,rgba(0,0,0,0.1) 1127px);"></div><div style="position:absolute;left:1006px;top:657px;width:492px;height:41px;background:linear-gradient(to bottom,rgba(0,0,0,0) 0px,rgba(0,0,0,0.022) 19px,rgba(0,0,0,0.1) 41px);-webkit-mask-image:linear-gradient(to right,#000 414px,rgba(0,0,0,0.1) 492px);"></div><svg style="position:absolute;left:1450px;top:640px" width="48" height="50" viewBox="0 0 48 50"><path d="M24 3.6 Q25.5 3 27 3.9 L41 12 Q43 13.2 43 15.5 V34.5 Q43 36.8 41 38 L27 46.1 Q24.5 47.4 22 46.1 L7 38 Q5 36.8 5 34.5 V15.5 Q5 13.2 7 12 L21 3.9 Q22.5 3 24 3.6 Z" fill="#06c7c9"/><path d="M24 14 Q25.2 22.8 34 24.6 Q25.2 26.4 24 34 Q22.8 26.4 14 24.6 Q22.8 22.8 24 14 Z" fill="#fff"/></svg>
</body></html>
